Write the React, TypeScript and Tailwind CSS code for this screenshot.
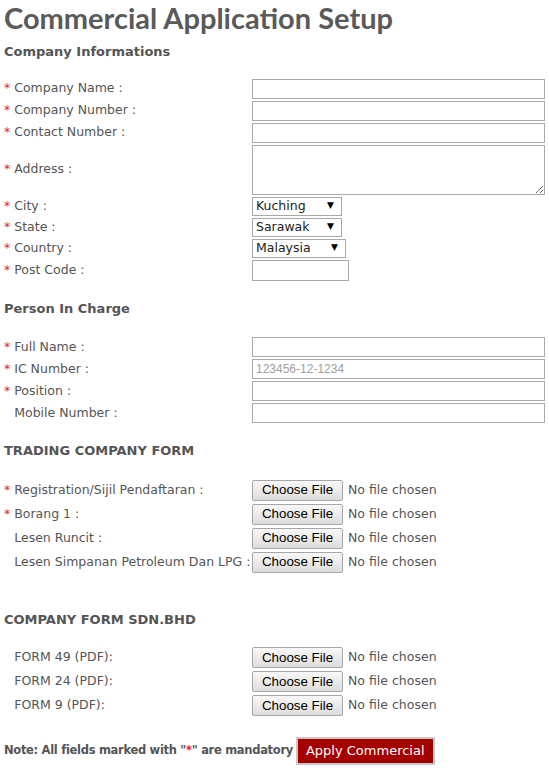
import { FC, ReactNode } from "react"

const Req = () => <span className="text-[#e8194f]">*</span>

const Label: FC<{ req?: boolean; children: ReactNode }> = ({ req, children }) => (
    <div className="w-[248px] shrink-0 whitespace-nowrap">
        {req ? <Req /> : <span className="invisible">*</span>} {children}
    </div>
)

const TextRow: FC<{ label: string; req?: boolean; placeholder?: string }> = ({ label, req, placeholder }) => (
    <div className="flex items-center">
        <Label req={req}>{label}</Label>
        <input
            type="text"
            placeholder={placeholder}
            className="h-[20px] w-[293px] border border-[#a9a9a9] bg-white px-[3px] font-['Liberation_Sans',sans-serif] text-[12px] placeholder:text-[#a0a0a0] outline-none"
        />
    </div>
)

const SelectRow: FC<{ label: string; value: string; width: string }> = ({ label, value, width }) => (
    <div className="flex items-center">
        <Label req>{label}</Label>
        <div className={`flex h-[19px] items-center justify-between border border-[#a9a9a9] bg-white pl-[3px] pr-[7px] text-[#222] ${width}`}>
            <span>{value}</span>
            <span className="text-[9px] text-black">▼</span>
        </div>
    </div>
)

const FileRow: FC<{ label: string; req?: boolean }> = ({ label, req }) => (
    <div className="flex items-center">
        <Label req={req}>{label}</Label>
        <div className="flex items-center gap-[5px]">
            <button className="h-[21px] w-[91px] rounded-[2px] border border-[#a6a6a6] bg-gradient-to-b from-[#f8f8f8] to-[#dddddd] font-['Liberation_Sans',sans-serif] text-[13.33px] leading-none text-black">
                Choose File
            </button>
            <span className="text-[#555]">No file chosen</span>
        </div>
    </div>
)

const Heading: FC<{ children: ReactNode; className?: string }> = ({ children, className }) => (
    <h3 className={`text-[13px] font-bold text-[#555] ${className ?? ""}`}>{children}</h3>
)

const App = () => {
    return (
        <div className="min-h-[770px] w-[549px] bg-white px-[4px] font-['DejaVu_Sans',sans-serif] text-[12.5px] text-[#555]">
            <h1 className="font-['Lato',sans-serif] text-[29px] font-bold leading-[35px] text-[#5a5a5a]">Commercial Application Setup</h1>

            <Heading className="mt-[7px]">Company Informations</Heading>
            <div className="mt-[17px] flex flex-col gap-[2px]">
                <TextRow label="Company Name :" req />
                <TextRow label="Company Number :" req />
                <TextRow label="Contact Number :" req />
                <div className="flex items-center">
                    <Label req>Address :</Label>
                    <textarea className="h-[50px] w-[293px] border border-[#a9a9a9] bg-white outline-none" />
                </div>
                <SelectRow label="City :" value="Kuching" width="w-[90px]" />
                <SelectRow label="State :" value="Sarawak" width="w-[90px]" />
                <SelectRow label="Country :" value="Malaysia" width="w-[94px]" />
                <div className="flex items-center">
                    <Label req>Post Code :</Label>
                    <input type="text" className="h-[21px] w-[97px] border border-[#a9a9a9] bg-white outline-none" />
                </div>
            </div>

            <Heading className="mt-[18px]">Person In Charge</Heading>
            <div className="mt-[19px] flex flex-col gap-[2px]">
                <TextRow label="Full Name :" req />
                <TextRow label="IC Number :" req placeholder="123456-12-1234" />
                <TextRow label="Position :" req />
                <TextRow label="Mobile Number :" />
            </div>

            <Heading className="mt-[18px]">TRADING COMPANY FORM</Heading>
            <div className="mt-[19px] flex flex-col gap-[3px]">
                <FileRow label="Registration/Sijil Pendaftaran :" req />
                <FileRow label="Borang 1 :" req />
                <FileRow label="Lesen Runcit :" />
                <FileRow label="Lesen Simpanan Petroleum Dan LPG :" />
            </div>

            <Heading className="mt-[37px]">COMPANY FORM SDN.BHD</Heading>
            <div className="mt-[18px] flex flex-col gap-[3px]">
                <FileRow label="FORM 49 (PDF):" />
                <FileRow label="FORM 24 (PDF):" />
                <FileRow label="FORM 9 (PDF):" />
            </div>

            <div className="mt-[21px] flex items-center gap-[3px]">
                <p className="text-[11.5px] font-bold tracking-[-0.3px]">
                    Note: All fields marked with "<Req />" are mandatory
                </p>
                <button className="h-[28px] border-2 border-[#c8c8c8] bg-[#a50000] px-[8px] text-[13px] text-white">
                    Apply Commercial
                </button>
            </div>
        </div>
    )
}

export default App
